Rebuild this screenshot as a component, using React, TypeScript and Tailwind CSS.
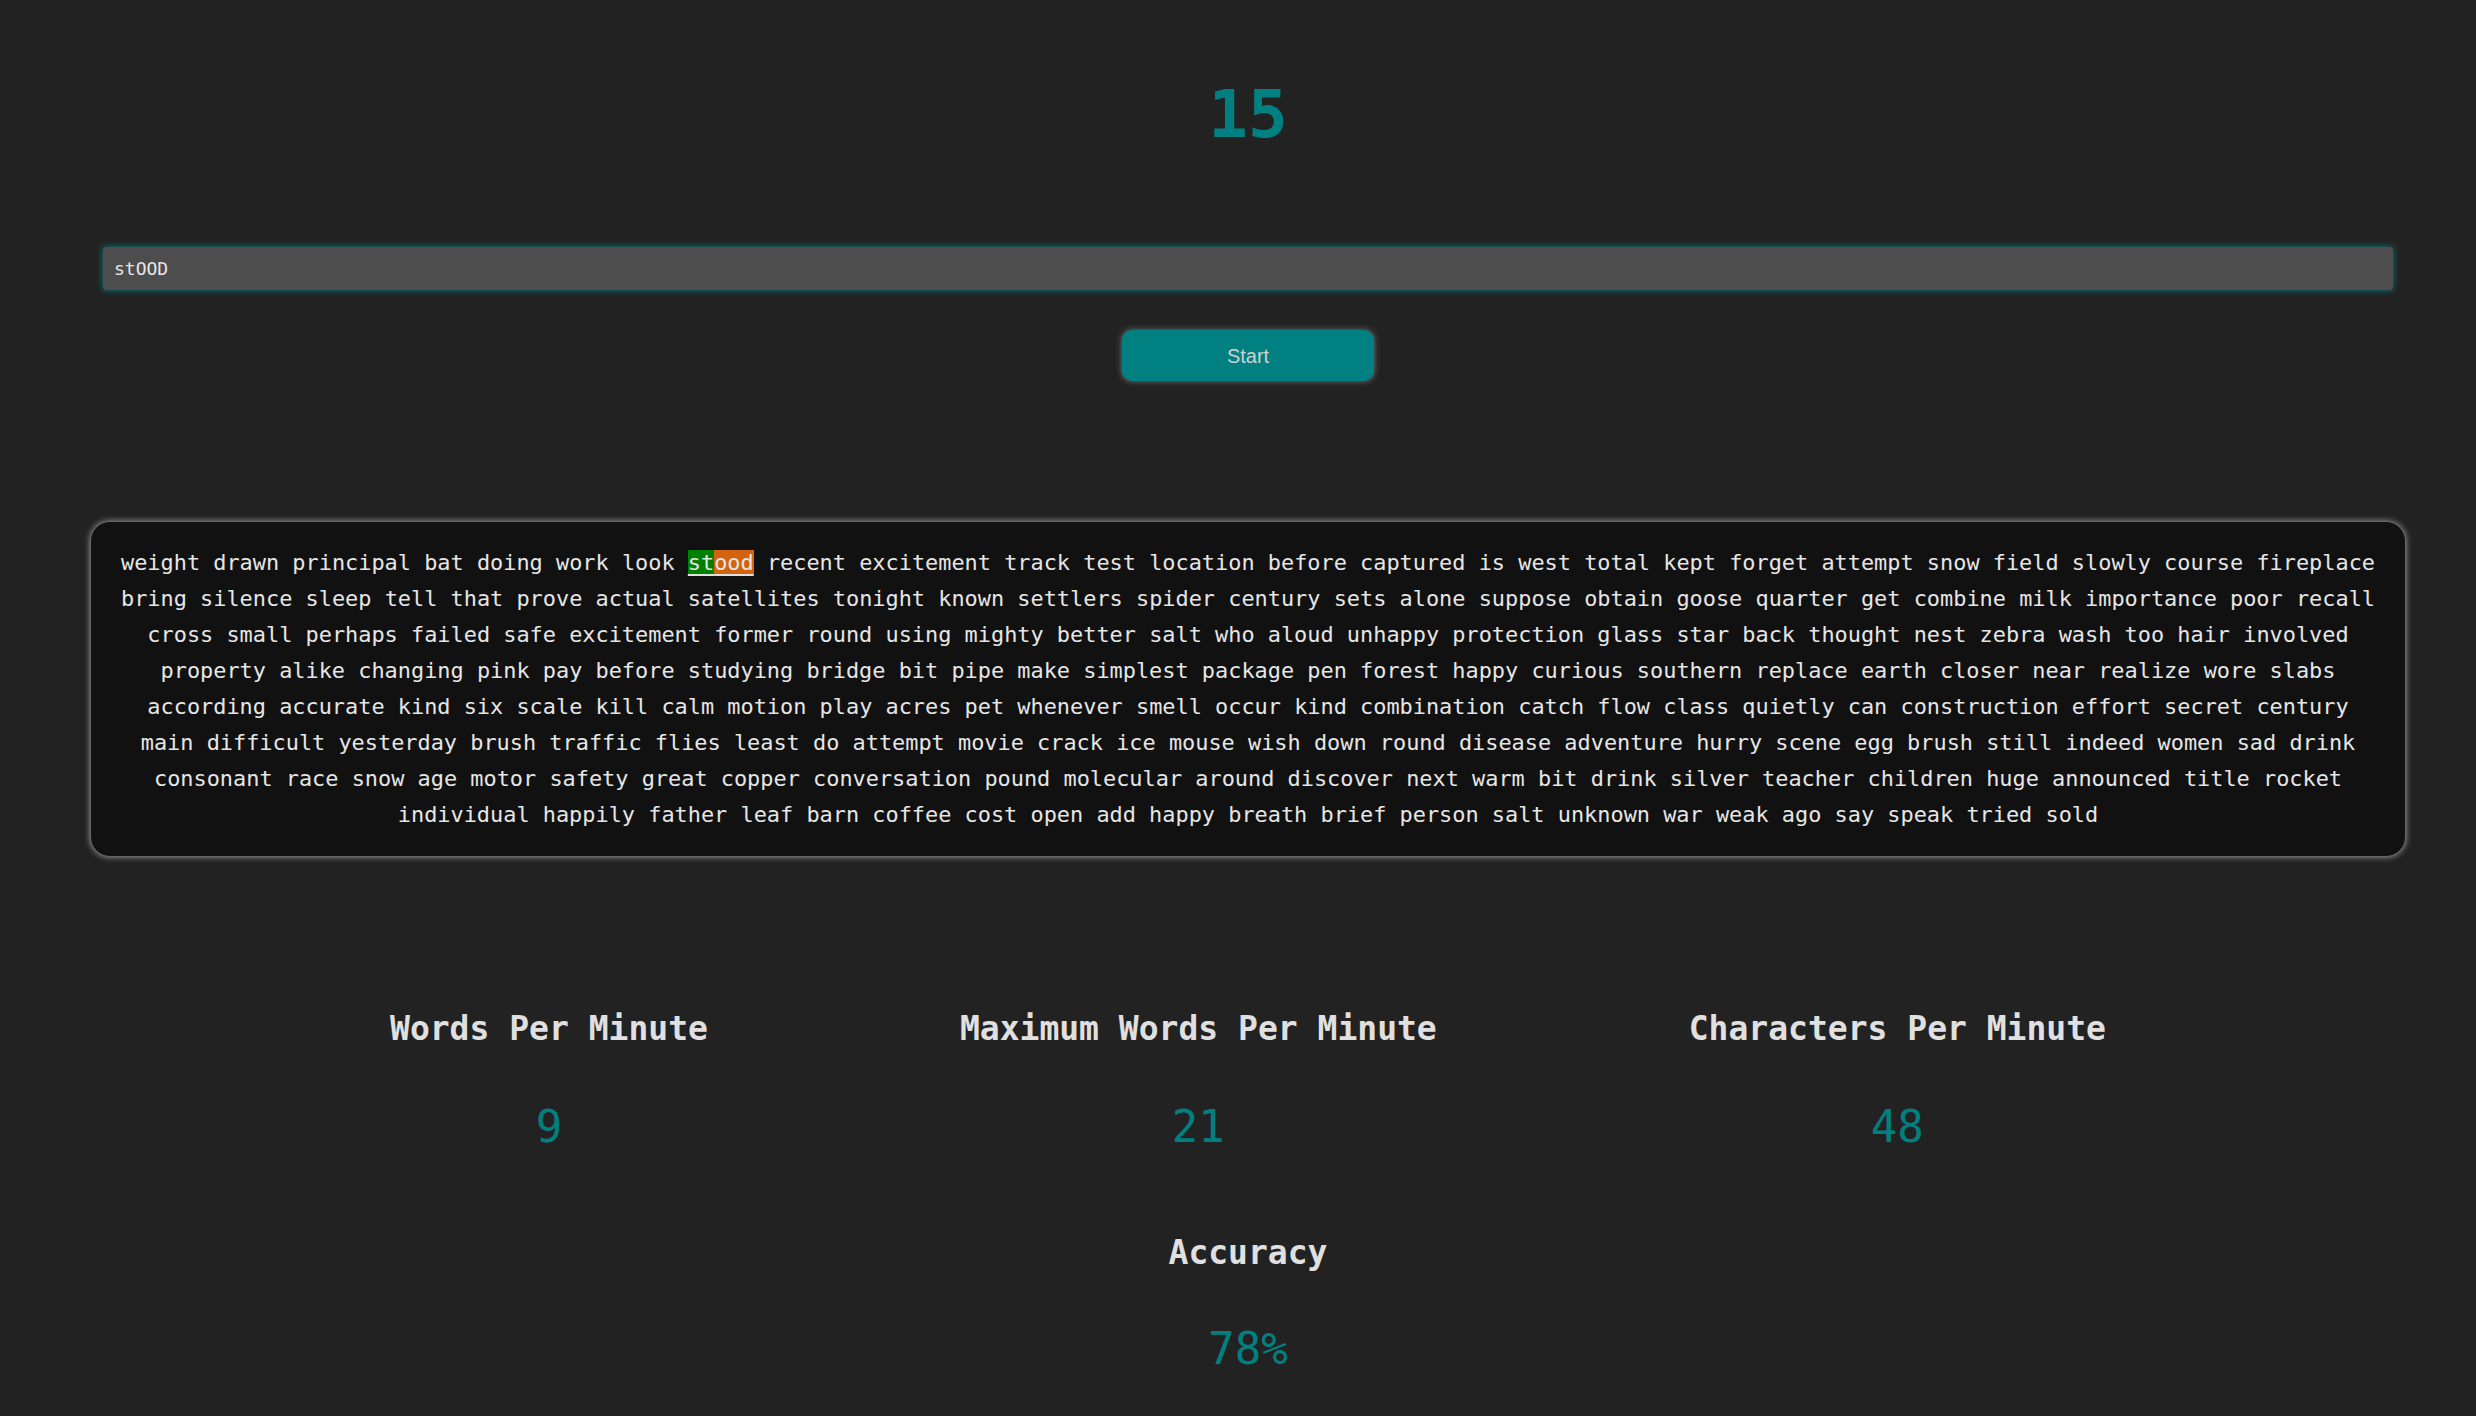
import { useState } from "react";

const lines = [
  "weight drawn principal bat doing work look stood recent excitement track test location before captured is west total kept forget attempt snow field slowly course fireplace",
  "bring silence sleep tell that prove actual satellites tonight known settlers spider century sets alone suppose obtain goose quarter get combine milk importance poor recall",
  "cross small perhaps failed safe excitement former round using mighty better salt who aloud unhappy protection glass star back thought nest zebra wash too hair involved",
  "property alike changing pink pay before studying bridge bit pipe make simplest package pen forest happy curious southern replace earth closer near realize wore slabs",
  "according accurate kind six scale kill calm motion play acres pet whenever smell occur kind combination catch flow class quietly can construction effort secret century",
  "main difficult yesterday brush traffic flies least do attempt movie crack ice mouse wish down round disease adventure hurry scene egg brush still indeed women sad drink",
  "consonant race snow age motor safety great copper conversation pound molecular around discover next warm bit drink silver teacher children huge announced title rocket",
  "individual happily father leaf barn coffee cost open add happy breath brief person salt unknown war weak ago say speak tried sold",
];

const mono = "font-['DejaVu_Sans_Mono','Liberation_Mono',monospace]";

// the word currently being typed, split into correct / wrong letters
const CurrentWord = () => (
  <span className="underline decoration-[#e0e0e0] underline-offset-4">
    <span className="bg-[#008000]">st</span>
    <span className="bg-[#d2640f]">ood</span>
  </span>
);

const Line = ({ text }: { text: string }) => {
  const words = text.split(" ");
  return (
    <div className="whitespace-nowrap">
      {words.map((w, i) => (
        <span key={i}>
          {w === "stood" ? <CurrentWord /> : w}
          {i < words.length - 1 ? " " : ""}
        </span>
      ))}
    </div>
  );
};

const Stat = ({ label, value }: { label: string; value: string }) => (
  <div className="flex flex-col items-center">
    <div className="text-[33px] leading-[40px] font-bold text-[#e0e0e0]">{label}</div>
    <div className="mt-[54px] text-[44px] leading-[48px] text-[#008080]">{value}</div>
  </div>
);

export default function App() {
  const [typed, setTyped] = useState("stOOD");

  return (
    <div className={`min-h-screen bg-[#222222] pl-5 pb-10 ${mono}`}>
      <div className="flex flex-col items-center">
        <div className="pt-[82px] text-[66px] leading-none font-bold text-[#008080]">15</div>

        <input
          value={typed}
          onChange={(e) => setTyped(e.target.value)}
          className="mt-[99px] h-[43px] w-[calc(100%-166px)] rounded-[3px] bg-[#4d4d4d] px-[11px] text-[18px] text-[#e6e6e6] shadow-[0_0_6px_#008080] outline-none"
        />

        <button className="mt-[40px] h-[51px] w-[252px] rounded-[10px] bg-[#008080] font-['Liberation_Sans',Arial,sans-serif] text-[20px] text-[#d0d0d0] shadow-[0_0_6px_#777]">
          Start
        </button>

        <div className="mt-[140px] w-[calc(100%-140px)] rounded-[20px] border border-[#666] bg-[#111111] px-4 pt-[23px] pb-[23px] text-center text-[21.9px] leading-[36px] text-[#e6e6e6] shadow-[0_0_6px_#999]">
          {lines.map((l, i) => (
            <Line key={i} text={l} />
          ))}
        </div>

        <div className="mt-[152px] flex justify-center gap-[252px]">
          <Stat label="Words Per Minute" value="9" />
          <Stat label="Maximum Words Per Minute" value="21" />
          <Stat label="Characters Per Minute" value="48" />
        </div>

        <div className="mt-[82px] flex flex-col items-center">
          <div className="text-[33px] leading-[40px] font-bold text-[#e0e0e0]">Accuracy</div>
          <div className="mt-[52px] text-[44px] leading-[48px] text-[#008080]">78%</div>
        </div>
      </div>
    </div>
  );
}
